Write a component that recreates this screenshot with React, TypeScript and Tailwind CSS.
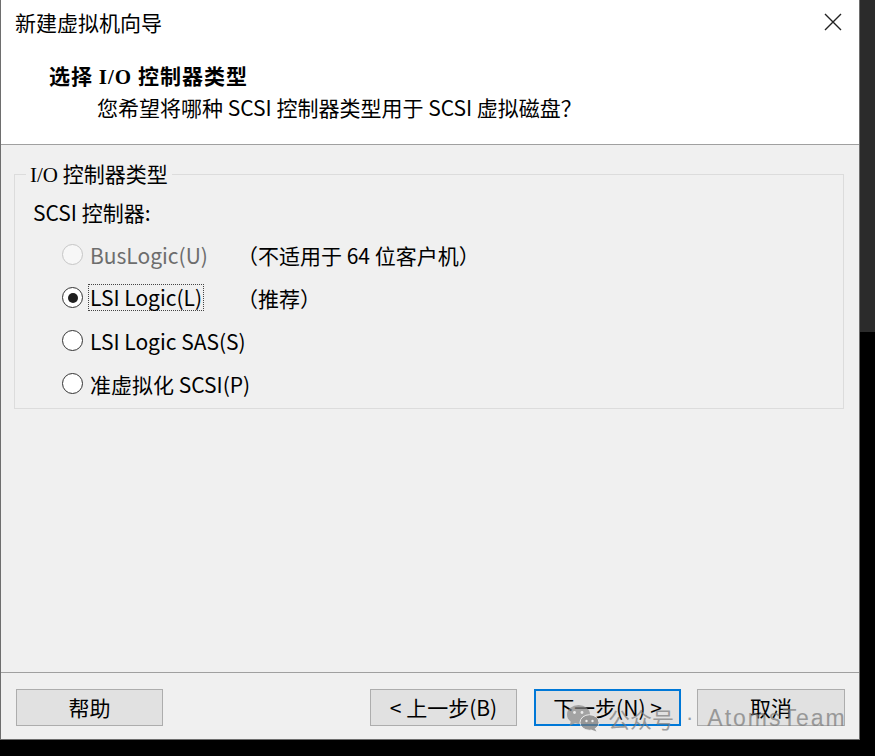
import React from "react";

const serif = "font-['Liberation_Serif','Noto_Sans_CJK_SC',serif]";

function Radio({ state }: { state: "disabled" | "checked" | "normal" }) {
  if (state === "disabled") {
    return <div className="w-[21px] h-[21px] rounded-full border border-[#c6c6c6] bg-[#f7f7f7] shrink-0" />;
  }
  return (
    <div className="w-[21px] h-[21px] rounded-full border-[1.5px] border-[#333333] bg-white shrink-0 flex items-center justify-center">
      {state === "checked" && <div className="w-[10px] h-[10px] rounded-full bg-[#1e1e1e]" />}
    </div>
  );
}

function Row({
  state,
  label,
  note,
  focused,
}: {
  state: "disabled" | "checked" | "normal";
  label: string;
  note?: string;
  focused?: boolean;
}) {
  return (
    <div className="h-[43px] flex items-center ml-[36px]">
      <Radio state={state} />
      <div className="w-[149px] ml-[5px] shrink-0 flex items-center">
        {focused ? (
          <span className="border border-dotted border-[#444] px-[1px] leading-[25px] whitespace-nowrap">{label}</span>
        ) : (
          <span className={`pl-[2px] leading-[28px] whitespace-nowrap ${state === "disabled" ? "text-[#6d6d6d]" : ""}`}>
            {label}
          </span>
        )}
      </div>
      {note && <span className="leading-[28px] whitespace-nowrap">{note}</span>}
    </div>
  );
}

function Btn({ children, primary, w }: { children: React.ReactNode; primary?: boolean; w: string }) {
  return (
    <div
      className={`h-[37px] ${w} bg-[#e1e1e1] flex items-center justify-center leading-none whitespace-nowrap ${
        primary ? "border-2 border-[#0078d7]" : "border border-[#adadad]"
      }`}
    >
      {children}
    </div>
  );
}

export default function App() {
  return (
    <div className="w-[875px] h-[756px] bg-black flex items-start overflow-hidden font-['Noto_Sans_CJK_SC',sans-serif] text-[21px] text-black">
      <div className="relative w-[860px] h-[740px] flex flex-col border-x border-b border-[#6e6e6e] bg-[#f0f0f0]">
        {/* Header */}
        <div className="h-[145px] bg-white border-b border-[#a0a0a0] flex flex-col shrink-0">
          <div className="h-[44px] flex items-center justify-between pl-[14px] pr-[17px]">
            <span className="leading-[28px]">新建虚拟机向导</span>
            <svg width="18" height="18" viewBox="0 0 18 18">
              <path d="M1 1 L17 17 M17 1 L1 17" stroke="#222" strokeWidth="1.4" fill="none" />
            </svg>
          </div>
          <div className="mt-[16px] pl-[48px] font-bold leading-[30px] whitespace-nowrap tracking-[1px]">
            选择 <span className={serif}>I/O</span> 控制器类型
          </div>
          <div className="pl-[96px] leading-[30px] whitespace-nowrap">您希望将哪种 SCSI 控制器类型用于 SCSI 虚拟磁盘？</div>
        </div>

        {/* Body */}
        <div className="flex-1 flex flex-col">
          <fieldset className="mt-[14px] ml-[13px] w-[830px] h-[250px] border border-[#dcdcdc] px-[11px]">
            <legend className="px-[4px] leading-[28px] whitespace-nowrap">
              <span className={serif}>I/O</span> 控制器类型
            </legend>
            <div className="mt-[9px] pl-[7px] leading-[28px]">SCSI 控制器:</div>
            <div className="mt-[7px] flex flex-col">
              <Row state="disabled" label="BusLogic(U)" note="（不适用于 64 位客户机）" />
              <Row state="checked" label="LSI Logic(L)" note="（推荐）" focused />
              <Row state="normal" label="LSI Logic SAS(S)" />
              <Row state="normal" label="准虚拟化 SCSI(P)" />
            </div>
          </fieldset>
        </div>

        {/* Footer */}
        <div className="h-[67px] border-t border-[#a0a0a0] flex items-start pt-[16px] pl-[15px] pr-[14px] shrink-0">
          <Btn w="w-[147px]">帮助</Btn>
          <div className="ml-auto flex">
            <Btn w="w-[147px]">&lt; 上一步(B)</Btn>
            <div className="ml-[17px]">
              <Btn w="w-[147px]" primary>
                下一步(N) &gt;
              </Btn>
            </div>
            <div className="ml-[16px]">
              <Btn w="w-[148px]">取消</Btn>
            </div>
          </div>
        </div>

        {/* Watermark */}
        <div className="absolute left-[565px] top-[704px] flex items-center opacity-70 pointer-events-none">
          <svg width="34" height="28" viewBox="0 0 34 28">
            <ellipse cx="12.5" cy="10.5" rx="11.5" ry="9.5" fill="#8a8a8a" />
            <path d="M5 17 L3.5 22 L9.5 19 Z" fill="#8a8a8a" />
            <circle cx="8.5" cy="8.5" r="1.4" fill="#f0f0f0" />
            <circle cx="16" cy="8.5" r="1.4" fill="#f0f0f0" />
            <ellipse cx="23.5" cy="18.5" rx="9.5" ry="7.8" fill="#777777" stroke="#f0f0f0" strokeWidth="1" />
            <path d="M28.5 24 L30.5 27.5 L25 25.5 Z" fill="#777777" />
            <circle cx="20.5" cy="17" r="1.2" fill="#f0f0f0" />
            <circle cx="26.5" cy="17" r="1.2" fill="#f0f0f0" />
          </svg>
          <span className="ml-[8px] text-[22px] leading-[28px] text-[#7a7a7a] whitespace-nowrap">公众号</span>
          <span className="ml-[12px] font-['Liberation_Sans',sans-serif] text-[22px] leading-[28px] text-[#7a7a7a]">·</span>
          <span className="ml-[14px] font-['Liberation_Sans',sans-serif] text-[23px] tracking-[2px] leading-[28px] text-[#7a7a7a] whitespace-nowrap">
            AtomsTeam
          </span>
        </div>
      </div>

      {/* Right dark strip */}
      <div className="w-[15px] h-[756px] flex flex-col">
        <div className="h-[332px] bg-[#2b2b2b]" />
        <div className="flex-1 bg-black" />
      </div>
    </div>
  );
}
